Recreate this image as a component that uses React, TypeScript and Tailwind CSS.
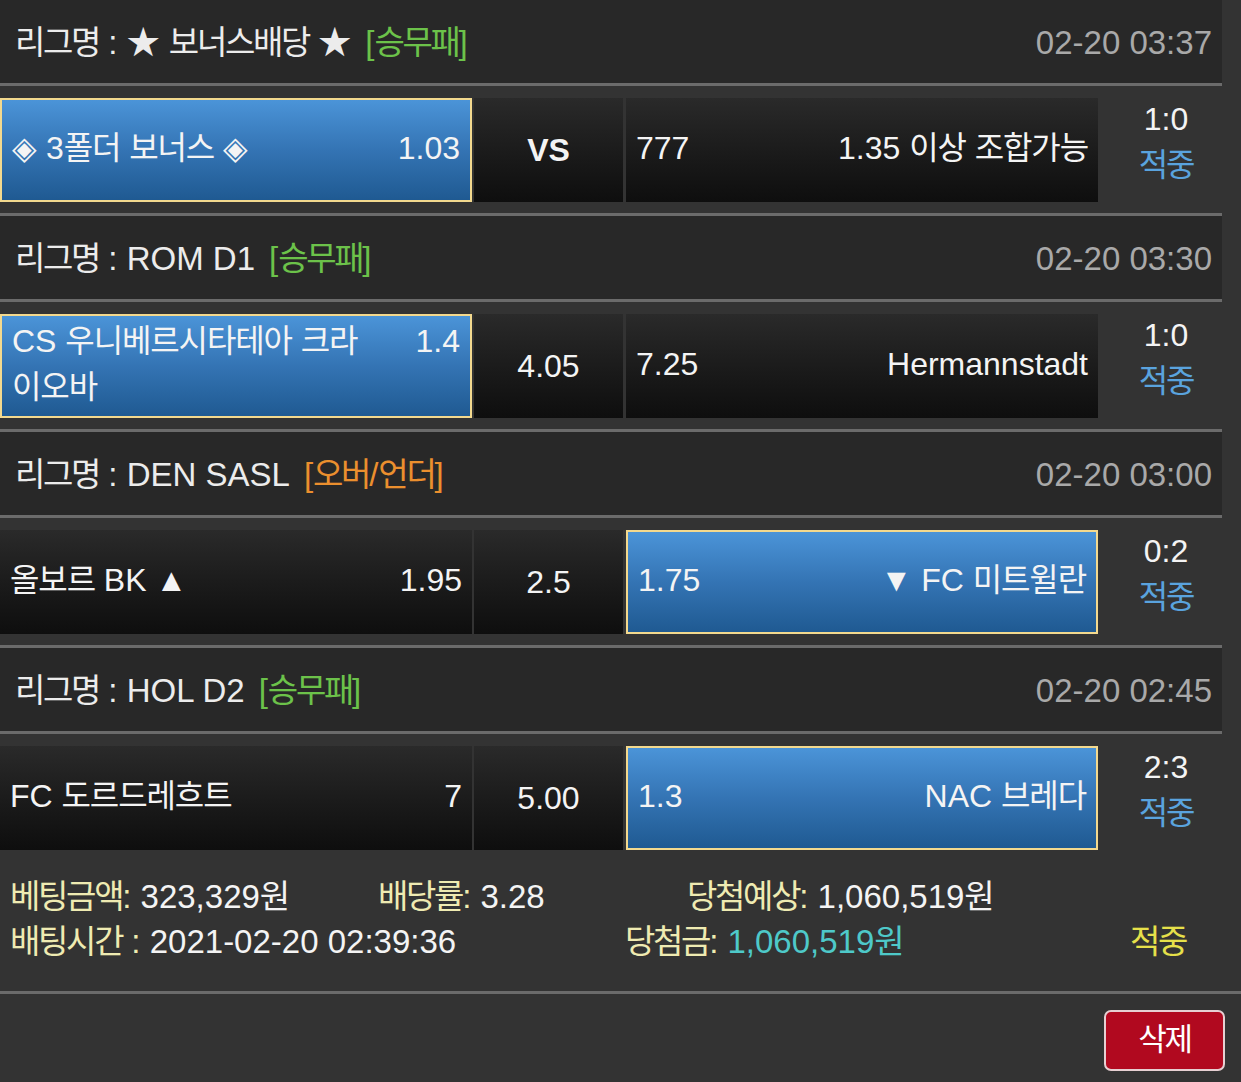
import React from "react";

const K = ({ t, loose }: { t: string; loose?: boolean }) => {
  const parts = t.split(/([\uAC00-\uD7A3]+)/);
  return (
    <>
      {parts.map((p, i) =>
        /[\uAC00-\uD7A3]/.test(p) ? (
          <span key={i} className={loose ? "tracking-[-0.035em]" : "tracking-[-0.07em]"}>
            {p}
          </span>
        ) : (
          <React.Fragment key={i}>{p}</React.Fragment>
        )
      )}
    </>
  );
};

type Side = { name: string; name2?: string; odds: string; sel?: boolean };
type Match = {
  league: string;
  type: string;
  typeColor: string;
  date: string;
  home: Side;
  draw: string;
  drawBold?: boolean;
  away: Side;
  score: string;
};

const matches: Match[] = [
  {
    league: "리그명 : ★ 보너스배당 ★",
    type: "[승무패]",
    typeColor: "text-[#6cc24a]",
    date: "02-20 03:37",
    home: { name: "◈ 3폴더 보너스 ◈", odds: "1.03", sel: true },
    draw: "VS",
    drawBold: true,
    away: { name: "1.35 이상 조합가능", odds: "777" },
    score: "1:0",
  },
  {
    league: "리그명 : ROM D1",
    type: "[승무패]",
    typeColor: "text-[#6cc24a]",
    date: "02-20 03:30",
    home: { name: "CS 우니베르시타테아 크라", name2: "이오바", odds: "1.4", sel: true },
    draw: "4.05",
    away: { name: "Hermannstadt", odds: "7.25" },
    score: "1:0",
  },
  {
    league: "리그명 : DEN SASL",
    type: "[오버/언더]",
    typeColor: "text-[#eb8f2e]",
    date: "02-20 03:00",
    home: { name: "올보르 BK ▲", odds: "1.95" },
    draw: "2.5",
    away: { name: "▼ FC 미트윌란", odds: "1.75", sel: true },
    score: "0:2",
  },
  {
    league: "리그명 : HOL D2",
    type: "[승무패]",
    typeColor: "text-[#6cc24a]",
    date: "02-20 02:45",
    home: { name: "FC 도르드레흐트", odds: "7" },
    draw: "5.00",
    away: { name: "NAC 브레다", odds: "1.3", sel: true },
    score: "2:3",
  },
];

const selCls =
  "border-2 border-[#f3d98e] bg-gradient-to-b from-[#4b94d8] via-[#3474b4] to-[#1f5a92]";
const darkCls = "bg-gradient-to-b from-[#2a2a2a] to-[#0e0e0e]";

function HomeCell({ s }: { s: Side }) {
  return (
    <div
      className={`w-[472px] h-[104px] flex items-center px-[10px] text-[32px] leading-[46px] text-[#f4f4f4] ${
        s.sel ? selCls : darkCls
      }`}
    >
      <div className="w-full -mt-[4px]">
        <span className="float-right">{s.odds}</span>
        <K t={s.name} loose />
        {s.name2 && (
          <>
            <br />
            <K t={s.name2} loose />
          </>
        )}
      </div>
    </div>
  );
}

function AwayCell({ s }: { s: Side }) {
  return (
    <div
      className={`w-[472px] h-[104px] flex items-center justify-between px-[10px] text-[32px] leading-[46px] text-[#f4f4f4] ${
        s.sel ? selCls : darkCls
      }`}
    >
      <span className="-mt-[4px]">{s.odds}</span>
      <span className="-mt-[4px]">
        <K t={s.name} loose />
      </span>
    </div>
  );
}

function Row({ m, last }: { m: Match; last: boolean }) {
  return (
    <div className="w-[1222px]">
      <div className="h-[83px] bg-[#282828] flex items-center justify-between pl-[15px] pr-[10px] text-[33px]">
        <div className="flex items-center mt-[2px]">
          <span className="text-[#ececec]">
            <K t={m.league} />
          </span>
          <span className={`${m.typeColor} ml-[14px]`}>
            <K t={m.type} />
          </span>
        </div>
        <span className="text-[#a9a9a9] mt-[2px]">{m.date}</span>
      </div>
      <div className="h-[3px] bg-[#6b6b6b]" />
      <div className={`flex pt-[12px] ${last ? "pb-0" : "pb-[11px]"}`}>
        <HomeCell s={m.home} />
        <div
          className={`w-[149px] h-[104px] ml-[2px] mr-[3px] flex items-center justify-center text-[32px] text-[#f4f4f4] ${darkCls} ${
            m.drawBold ? "font-bold" : ""
          }`}
        >
          {m.draw}
        </div>
        <AwayCell s={m.away} />
        <div className="w-[124px] flex flex-col items-center pl-[12px] -mt-[2px] text-[32px] leading-[46px]">
          <span className="text-[#f4f4f4]">{m.score}</span>
          <span className="text-[#5aa3de]">
            <K t="적중" />
          </span>
        </div>
      </div>
      {!last && <div className="h-[3px] bg-[#6b6b6b]" />}
    </div>
  );
}

export default function App() {
  return (
    <div
      className="w-[1241px] h-[1082px] bg-[#333333] overflow-hidden"
      style={{ fontFamily: '"Liberation Sans", "Noto Sans CJK KR", sans-serif' }}
    >
      {matches.map((m, i) => (
        <Row key={i} m={m} last={i === matches.length - 1} />
      ))}
      <div className="pt-[24px] pb-[27px] text-[33px] leading-[45px] text-[#f4f4f4]">
        <div className="flex">
          <div className="w-[378px] pl-[10px]">
            <span className="text-[#efebb2]">
              <K t="베팅금액" />:
            </span>{" "}
            <K t="323,329원" />
          </div>
          <div className="w-[309px]">
            <span className="text-[#efebb2]">
              <K t="배당률" />:
            </span>{" "}
            3.28
          </div>
          <div>
            <span className="text-[#efebb2]">
              <K t="당첨예상" />:
            </span>{" "}
            <K t="1,060,519원" />
          </div>
        </div>
        <div className="flex">
          <div className="w-[625px] pl-[10px]">
            <span className="text-[#efebb2]">
              <K t="배팅시간" /> :
            </span>{" "}
            2021-02-20 02:39:36
          </div>
          <div className="w-[505px]">
            <span className="text-[#efebb2]">
              <K t="당첨금" />:
            </span>{" "}
            <span className="text-[#4ec9c9]">
              <K t="1,060,519원" />
            </span>
          </div>
          <div className="text-[#e6e04a]">
            <K t="적중" />
          </div>
        </div>
      </div>
      <div className="h-[3px] bg-[#6b6b6b]" />
      <div className="flex justify-end pt-[16px] pr-[16px]">
        <div className="w-[121px] h-[61px] rounded-[7px] border-2 border-[#e6cfd2] bg-[#b1091f] flex items-center justify-center text-[31px] text-white">
          <K t="삭제" />
        </div>
      </div>
    </div>
  );
}
